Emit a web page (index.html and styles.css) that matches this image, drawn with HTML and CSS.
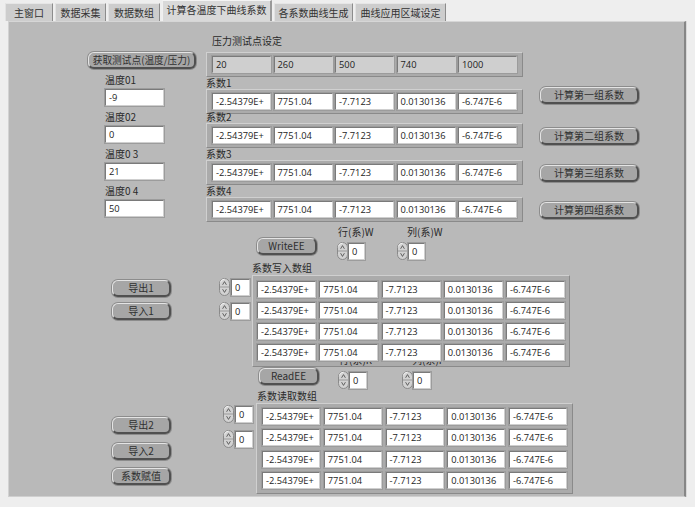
FILE: index.html
```html
<!DOCTYPE html>
<html lang="zh-CN">
<head>
<meta charset="utf-8">
<title>计算各温度下曲线系数</title>
<link rel="stylesheet" href="styles.css">
</head>
<body>
<svg class="defs" width="0" height="0" aria-hidden="true">
  <defs>
    <symbol id="spin" viewBox="0 0 11 18">
      <rect x="0.5" y="0.5" width="10" height="17" rx="5" ry="5" fill="#d2d2d2" stroke="#8a8a8a"/>
      <path d="M1.5 4.5 Q1.5 1.5 5.5 1.2" fill="none" stroke="#f2f2f2"/>
      <line x1="1" y1="9" x2="10" y2="9" stroke="#9a9a9a"/>
      <path d="M3.6 6.8 L5.5 3.6 L7.4 6.8" fill="none" stroke="#555" stroke-width="0.9"/>
      <path d="M3.6 11.2 L5.5 14.4 L7.4 11.2" fill="none" stroke="#555" stroke-width="0.9"/>
    </symbol>
  </defs>
</svg>

<div class="tabs">
  <div class="tab t1">主窗口</div>
  <div class="tab t2">数据采集</div>
  <div class="tab t3">数据数组</div>
  <div class="tab t4 active">计算各温度下曲线系数</div>
  <div class="tab t5">各系数曲线生成</div>
  <div class="tab t6">曲线应用区域设定</div>
</div>

<div class="panel">
  <div class="sec-top">
    <div class="col-temp">
      <div class="btn btn-get">获取测试点(温度/压力)</div>
      <div class="temp"><div class="lbl">温度01</div><div class="field w-temp">-9</div></div>
      <div class="temp"><div class="lbl">温度02</div><div class="field w-temp">0</div></div>
      <div class="temp"><div class="lbl">温度0 3</div><div class="field w-temp">21</div></div>
      <div class="temp"><div class="lbl">温度0 4</div><div class="field w-temp">50</div></div>
    </div>

    <div class="col-coef">
      <div class="lbl lbl-p">压力测试点设定</div>
      <div class="frame row5 frame-p">
        <div class="field ind">20</div><div class="field ind">260</div><div class="field ind">500</div><div class="field ind">740</div><div class="field ind">1000</div>
      </div>
      <div class="grp">
        <div class="lbl">系数1</div>
        <div class="frame row5">
          <div class="field">-2.54379E+</div><div class="field">7751.04</div><div class="field">-7.7123</div><div class="field">0.0130136</div><div class="field">-6.747E-6</div>
        </div>
      </div>
      <div class="grp g2">
        <div class="lbl">系数2</div>
        <div class="frame row5">
          <div class="field">-2.54379E+</div><div class="field">7751.04</div><div class="field">-7.7123</div><div class="field">0.0130136</div><div class="field">-6.747E-6</div>
        </div>
      </div>
      <div class="grp">
        <div class="lbl">系数3</div>
        <div class="frame row5">
          <div class="field">-2.54379E+</div><div class="field">7751.04</div><div class="field">-7.7123</div><div class="field">0.0130136</div><div class="field">-6.747E-6</div>
        </div>
      </div>
      <div class="grp">
        <div class="lbl">系数4</div>
        <div class="frame row5">
          <div class="field">-2.54379E+</div><div class="field">7751.04</div><div class="field">-7.7123</div><div class="field">0.0130136</div><div class="field">-6.747E-6</div>
        </div>
      </div>
    </div>

    <div class="col-calc">
      <div class="btn btn-calc first">计算第一组系数</div>
      <div class="btn btn-calc">计算第二组系数</div>
      <div class="btn btn-calc">计算第三组系数</div>
      <div class="btn btn-calc">计算第四组系数</div>
    </div>
  </div>

  <div class="sec-mid">
    <div class="col-io io1">
      <div class="btn btn-io">导出1</div>
      <div class="btn btn-io">导入1</div>
    </div>
    <div class="blk blk1">
      <div class="ctrl-row">
        <div class="btn btn-ee">WriteEE</div>
        <div class="sg sg1">
          <div class="lbl sg-lbl">行(系)W</div>
          <div class="spin-in"><svg class="spin"><use href="#spin"/></svg><div class="field w-sp">0</div></div>
        </div>
        <div class="sg sg2">
          <div class="lbl sg-lbl ind-lbl">列(系)W</div>
          <div class="spin-in"><svg class="spin"><use href="#spin"/></svg><div class="field w-sp">0</div></div>
        </div>
      </div>
      <div class="lbl arr-lbl">系数写入数组</div>
      <div class="arr-row">
        <div class="idx">
          <div class="spin-in"><svg class="spin"><use href="#spin"/></svg><div class="field w-idx">0</div></div>
          <div class="spin-in"><svg class="spin"><use href="#spin"/></svg><div class="field w-idx">0</div></div>
        </div>
        <div class="frame grid5 gw">
          <div class="field">-2.54379E+</div><div class="field">7751.04</div><div class="field">-7.7123</div><div class="field">0.0130136</div><div class="field">-6.747E-6</div>
          <div class="field">-2.54379E+</div><div class="field">7751.04</div><div class="field">-7.7123</div><div class="field">0.0130136</div><div class="field">-6.747E-6</div>
          <div class="field">-2.54379E+</div><div class="field">7751.04</div><div class="field">-7.7123</div><div class="field">0.0130136</div><div class="field">-6.747E-6</div>
          <div class="field">-2.54379E+</div><div class="field">7751.04</div><div class="field">-7.7123</div><div class="field">0.0130136</div><div class="field">-6.747E-6</div>
        </div>
      </div>
    </div>
  </div>

  <div class="sec-bot">
    <div class="col-io io2">
      <div class="btn btn-io">导出2</div>
      <div class="btn btn-io">导入2</div>
      <div class="btn btn-io">系数赋值</div>
    </div>
    <div class="blk blk2">
      <div class="ctrl-row">
        <div class="btn btn-ee rd">ReadEE</div>
        <div class="sg sg1r">
          <div class="clip"><div class="lbl sg-lbl">行(系)R</div></div>
          <div class="spin-in"><svg class="spin"><use href="#spin"/></svg><div class="field w-sp2">0</div></div>
        </div>
        <div class="sg sg2r">
          <div class="clip"><div class="lbl sg-lbl ind-lbl">列(系)R</div></div>
          <div class="spin-in"><svg class="spin"><use href="#spin"/></svg><div class="field w-sp2">0</div></div>
        </div>
      </div>
      <div class="lbl arr-lbl2">系数读取数组</div>
      <div class="arr-row arr-row2">
        <div class="idx idx2">
          <div class="spin-in"><svg class="spin"><use href="#spin"/></svg><div class="field w-idx2">0</div></div>
          <div class="spin-in"><svg class="spin"><use href="#spin"/></svg><div class="field w-idx2">0</div></div>
        </div>
        <div class="frame grid5 gr">
          <div class="field">-2.54379E+</div><div class="field">7751.04</div><div class="field">-7.7123</div><div class="field">0.0130136</div><div class="field">-6.747E-6</div>
          <div class="field">-2.54379E+</div><div class="field">7751.04</div><div class="field">-7.7123</div><div class="field">0.0130136</div><div class="field">-6.747E-6</div>
          <div class="field">-2.54379E+</div><div class="field">7751.04</div><div class="field">-7.7123</div><div class="field">0.0130136</div><div class="field">-6.747E-6</div>
          <div class="field">-2.54379E+</div><div class="field">7751.04</div><div class="field">-7.7123</div><div class="field">0.0130136</div><div class="field">-6.747E-6</div>
        </div>
      </div>
    </div>
  </div>
</div>
</body>
</html>
```

FILE: styles.css
```css
* { box-sizing: border-box; }

html, body {
  margin: 0;
  padding: 0;
}

body {
  width: 695px;
  height: 507px;
  overflow: hidden;
  background: #eeeeee;
  font-family: "Noto Sans CJK SC", "Noto Sans", sans-serif;
  font-size: 10px;
  color: #222;
}

.defs { position: absolute; width: 0; height: 0; overflow: hidden; }

/* ---------- tabs ---------- */
.tabs {
  display: flex;
  align-items: flex-end;
  gap: 2px;
  height: 21px;
  padding-left: 5px;
}

.tab {
  height: 18px;
  line-height: 17px;
  text-align: center;
  font-size: 10px;
  color: #333;
  background: #cdcdcd;
  border-top: 1px solid #e6e6e6;
  border-left: 1px solid #e2e2e2;
  border-right: 1px solid #8c8c8c;
  white-space: nowrap;
}

.tab.active {
  height: 21px;
  line-height: 18px;
  background: #d9d9d9;
  border-top: 1px solid #f4f4f4;
  border-left: 1px solid #f0f0f0;
  border-right: 2px solid #9a9a9a;
  padding-bottom: 2px;
}

.t1 { width: 48px; }
.t2 { width: 51px; }
.t3 { width: 52px; }
.t4 { width: 110px; }
.t5 { width: 79px; }
.t6 { width: 91px; }

/* ---------- panel ---------- */
.panel {
  margin-left: 8px;
  width: 678px;
  height: 476px;
  background: #b9b9b9;
  border-top: 1px solid #d6d6d6;
  border-left: 1px solid #d2d2d2;
  border-right: 2px solid #868686;
  border-bottom: 1px solid #cfcfcf;
  box-shadow: 1px 0 0 #d8d8d8;
  padding-top: 13px;
}

/* ---------- generic pieces ---------- */
.lbl {
  line-height: 12px;
  height: 12px;
  font-size: 10px;
  color: #2a2a2a;
  white-space: nowrap;
}

.field {
  height: 17px;
  background: #ffffff;
  border-style: solid;
  border-width: 1px;
  border-color: #7a7a7a #cfcfcf #cfcfcf #7a7a7a;
  box-shadow: 0 0 0 1px #9c9c9c;
  font-family: "Open Sans", "Noto Sans", sans-serif;
  font-size: 9.3px;
  line-height: 15px;
  padding-left: 3px;
  color: #1c1c1c;
  white-space: nowrap;
  overflow: hidden;
}

.field.ind {
  background: #cfcfcf;
}

.frame {
  background: #ababab;
  border: 1px solid;
  border-color: #d0d0d0 #8a8a8a #8a8a8a #d0d0d0;
}

.btn {
  height: 17px;
  background: #a6a6a6;
  border-style: solid;
  border-width: 1px 2px 2px 1px;
  border-color: #e4e4e4 #505050 #505050 #e4e4e4;
  border-radius: 6px;
  box-shadow: 0 0 0 1px #8c8c8c;
  text-align: center;
  font-size: 10px;
  line-height: 14px;
  color: #303030;
  white-space: nowrap;
}

.spin-in {
  display: flex;
  align-items: center;
}

.spin {
  width: 11px;
  height: 18px;
  flex: none;
}

/* ---------- top section ---------- */
.sec-top {
  display: flex;
  align-items: flex-start;
  height: 187px;
}

.col-temp {
  margin-left: 79px;
  width: 108px;
}

.btn-get {
  margin-top: 17px;
  width: 108px;
  font-size: 9.7px;
}

.temp {
  margin-left: 17px;
  margin-top: 4px;
}

.temp .lbl {
  height: 14px;
  line-height: 14px;
  margin-bottom: 2px;
}

.w-temp { width: 59px; }

.col-coef {
  margin-left: 10px;
}

.lbl-p {
  padding-left: 6px;
}

.row5 {
  display: grid;
  grid-template-columns: repeat(5, 59px);
  column-gap: 2.5px;
  padding: 3px 5px;
}

.frame-p {
  margin-top: 5px;
}

.g2 {
  margin-top: -3px;
}

.col-calc {
  margin-left: 17px;
  padding-top: 52px;
  display: flex;
  flex-direction: column;
  gap: 20px;
}

.btn-calc {
  width: 99px;
}

.btn-calc.first {
  margin-bottom: 4px;
}

/* ---------- middle / bottom sections ---------- */
.sec-mid {
  display: flex;
  align-items: flex-start;
  margin-top: 4px;
  height: 140px;
}

.sec-bot {
  display: flex;
  align-items: flex-start;
  margin-top: -4px;
}

.col-io {
  margin-left: 103px;
  width: 59px;
  display: flex;
  flex-direction: column;
}

.io1 { margin-top: 54px; gap: 6px; }
.io2 { margin-top: 55px; gap: 8.5px; }

.btn-io { width: 59px; }

.blk1 { margin-left: 47px; }
.blk2 { margin-left: 51px; }

.ctrl-row {
  display: flex;
  align-items: flex-start;
}

.btn-ee {
  width: 60px;
  margin-left: 39px;
  margin-top: 12px;
}

.btn-ee.rd {
  margin-left: 37px;
  margin-top: 6px;
}

.sg {
  width: 40px;
  display: flex;
  flex-direction: column;
}

.sg1 { margin-left: 20px; }
.sg2 { margin-left: 20px; }
.sg1r { margin-left: 19px; }
.sg2r { margin-left: 24px; }

.sg-lbl { padding-left: 1px; }
.ind-lbl { padding-left: 10px; }

.sg .spin-in { margin-top: 4px; }

.clip {
  height: 4px;
  overflow: hidden;
}

.clip .lbl {
  margin-top: -8px;
}

.sg1r .spin-in, .sg2r .spin-in { margin-top: 5px; }

.w-sp { width: 17px; }
.w-sp2 { width: 18px; }

.arr-lbl {
  margin-left: 34px;
  margin-top: 2px;
}

.arr-lbl2 {
  margin-left: 35px;
  margin-top: 1px;
}

.arr-row {
  display: flex;
  align-items: flex-start;
  margin-top: 1px;
}

.idx {
  margin-left: 1px;
  margin-top: 3px;
  display: flex;
  flex-direction: column;
  gap: 6px;
}

.idx .spin-in { gap: 1px; }

.idx2 {
  margin-top: 2px;
  gap: 7px;
}

.w-idx { width: 19px; }
.w-idx2 { width: 18px; }

.grid5 {
  display: grid;
  grid-template-columns: repeat(5, 59px);
  grid-auto-rows: 17px;
}

.gw {
  margin-left: 2px;
  padding: 5px 4px;
  column-gap: 3.25px;
  row-gap: 4px;
}

.gr {
  margin-left: 3px;
  padding: 4px 5px;
  grid-template-columns: repeat(5, 58px);
  column-gap: 3.75px;
  row-gap: 4.3px;
}
```
